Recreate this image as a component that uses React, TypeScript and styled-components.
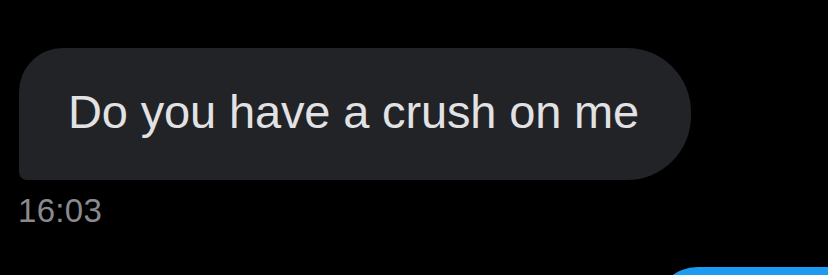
import { createGlobalStyle, styled } from 'styled-components';

const GlobalStyle = createGlobalStyle`
  html, body {
    margin: 0;
    padding: 0;
    background: #000;
    overflow: hidden;
  }
`;

export default function App() {
  return (
    <>
      <GlobalStyle />
      <Thread>
        <Incoming>
          <Bubble>Do you have a crush on me</Bubble>
          <Time>16:03</Time>
        </Incoming>
        <OutgoingBubble aria-hidden="true" />
      </Thread>
    </>
  );
}

const Thread = styled.div`
  height: 275px;
  box-sizing: border-box;
  padding: 48px 0 0 19px;
  display: flex;
  flex-direction: column;
  overflow: hidden;
  font-family: "Liberation Sans", Arial, sans-serif;
`;

const Incoming = styled.div`
  display: flex;
  flex-direction: column;
  align-items: flex-start;
`;

const Bubble = styled.div`
  background: #212327;
  color: #e2e2e4;
  font-size: 47px;
  line-height: 56px;
  letter-spacing: -0.15px;
  padding: 36px 52px 40px 49px;
  border-radius: 44px 64px 64px 8px;
  white-space: nowrap;
`;

const Time = styled.div`
  margin-top: 14px;
  margin-left: -1px;
  color: #8a8a8e;
  font-size: 33px;
  line-height: 33px;
  letter-spacing: 0.3px;
`;

const OutgoingBubble = styled.div`
  align-self: flex-end;
  flex-shrink: 0;
  margin-top: 40px;
  width: 174px;
  height: 132px;
  background: #1d9bf0;
  border-radius: 44px 0 0 44px;
`;
